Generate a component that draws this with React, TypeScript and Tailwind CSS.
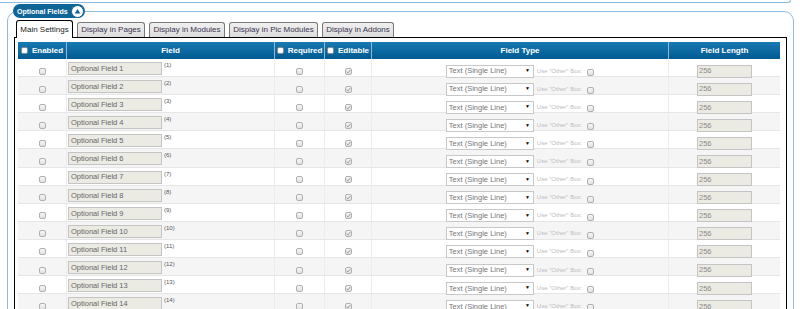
import React from "react";

const rows = Array.from({ length: 15 }, (_, i) => i + 1);

const tabs = [
  { label: "Main Settings", w: "w-[57px]", active: true },
  { label: "Display in Pages", w: "w-[68px]" },
  { label: "Display in Modules", w: "w-[76px]" },
  { label: "Display in Pic Modules", w: "w-[89px]" },
  { label: "Display in Addons", w: "w-[72px]" },
];

const Box = ({ checked, head }: { checked?: boolean; head?: boolean }) => (
  <span
    className={`relative inline-block h-[7px] w-[7px] shrink-0 rounded-[2px] border ${
      head ? "border-[#8a8a8a] bg-white" : "border-[#b0b0b0] bg-linear-to-b from-[#f6f6f6] to-[#e2e2e2]"
    }`}
  >
    {checked && (
      <svg viewBox="0 0 8 8" className="absolute left-0 top-0 h-[5px] w-[5px]">
        <path d="M1 4.2 L3 6.2 L7 1.5" fill="none" stroke="#8c8c8c" strokeWidth="1.4" />
      </svg>
    )}
  </span>
);

export default function App() {
  return (
    <div className="h-[309px] w-[800px] overflow-hidden bg-white font-['Liberation_Sans',Arial,sans-serif]">
      <div className="h-[3px] w-[791px] rounded-br-[8px] border-b border-r border-[#8fbbdc]" />
      <fieldset className="ml-[7px] mt-[1px] w-[787px] rounded-[10px] border border-[#8fbbdc] px-[6px] pb-2">
        <legend className="ml-[-1px] flex h-[14px] items-center rounded-full bg-[#0f6596] pl-[4px] pr-[1px]">
          <span className="text-[7px] font-bold leading-none text-white">Optional Fields</span>
          <span className="ml-[3px] flex h-[13px] w-[13px] items-center justify-center rounded-full border border-[#0f6596] bg-white">
            <svg viewBox="0 0 10 10" className="h-[7px] w-[7px]">
              <path d="M5 1.5 L9 8 L1 8 Z" fill="#0f6596" />
            </svg>
          </span>
        </legend>

        {/* tabs */}
        <div className="mt-[2px] flex items-end gap-[4px] pl-[2px]">
          {tabs.map((t) =>
            t.active ? (
              <div
                key={t.label}
                className={`${t.w} relative z-10 -mb-px flex h-[18px] items-center justify-center rounded-t-[3px] border border-b-0 border-black bg-white text-[8px] text-[#222]`}
              >
                {t.label}
              </div>
            ) : (
              <div
                key={t.label}
                className={`${t.w} flex h-[15px] items-center justify-center rounded-t-[3px] border border-b-0 border-[#7a7a7a] bg-linear-to-b from-[#f0f0f0] to-[#dcdcdc] text-[8px] text-[#3d3350]`}
              >
                {t.label}
              </div>
            )
          )}
        </div>

        {/* panel */}
        <div className="border border-black pl-[3px] pt-[4px] pb-2">
          <div className="w-[762px]">
            <div className="grid h-[17px] grid-cols-[48px_208px_50px_47px_297px_112px] bg-linear-to-b from-[#1a7ab2] to-[#005a91] text-[8px] font-bold text-white">
              <div className="flex items-center justify-center gap-[4px]">
                <Box head />
                <span>Enabled</span>
              </div>
              <div className="flex items-center justify-center border-l border-[#8fb8d4]">Field</div>
              <div className="flex items-center justify-center gap-[4px] border-l border-[#8fb8d4]">
                <Box head />
                <span>Required</span>
              </div>
              <div className="flex items-center justify-center gap-[4px] border-l border-[#8fb8d4]">
                <Box head />
                <span>Editable</span>
              </div>
              <div className="flex items-center justify-center border-l border-[#8fb8d4]">Field Type</div>
              <div className="flex items-center justify-center border-l border-[#8fb8d4]">Field Length</div>
            </div>

            {rows.map((n) => (
              <div
                key={n}
                className={`grid h-[18.1px] grid-cols-[48px_208px_50px_47px_297px_112px] border-b border-[#e6e6e6] ${
                  n % 2 === 0 ? "bg-[#f5f5f5]" : "bg-white"
                }`}
              >
                <div className="flex items-center justify-center">
                  <Box />
                </div>
                <div className="flex items-start border-l border-[#ececec] pl-[1px] pt-[3px]">
                  <div className="flex h-[13px] w-[94px] items-center border border-[#c4c4c4] bg-[#ebebe4] pl-[2px] text-[7.5px] text-[#666]">
                    Optional Field {n}
                  </div>
                  <span className="ml-[2px] mt-[0px] text-[6px] leading-none text-[#555]">({n})</span>
                </div>
                <div className="flex items-center justify-center border-l border-[#ececec]">
                  <Box />
                </div>
                <div className="flex items-center justify-center border-l border-[#ececec]">
                  <Box checked />
                </div>
                <div className="flex items-center justify-center border-l border-[#ececec]">
                  <div className="flex h-[13px] w-[88px] items-center justify-between border border-[#c8c8c8] bg-white pl-[2px] pr-[3px] text-[7.5px] text-[#777]">
                    <span>Text (Single Line)</span>
                    <span className="text-[5px] text-black">▼</span>
                  </div>
                  <span className="ml-[3px] text-[6px] text-[#bdbdbd]">Use "Other" Box:</span>
                  <span className="ml-[5px]">
                    <Box />
                  </span>
                </div>
                <div className="flex items-center justify-center border-l border-[#ececec]">
                  <div className="flex h-[13px] w-[55px] items-center border border-[#c4c4c4] bg-[#ebebe4] pl-[1px] text-[7.5px] text-[#8a8a8a]">
                    256
                  </div>
                </div>
              </div>
            ))}
          </div>
        </div>
      </fieldset>
    </div>
  );
}
